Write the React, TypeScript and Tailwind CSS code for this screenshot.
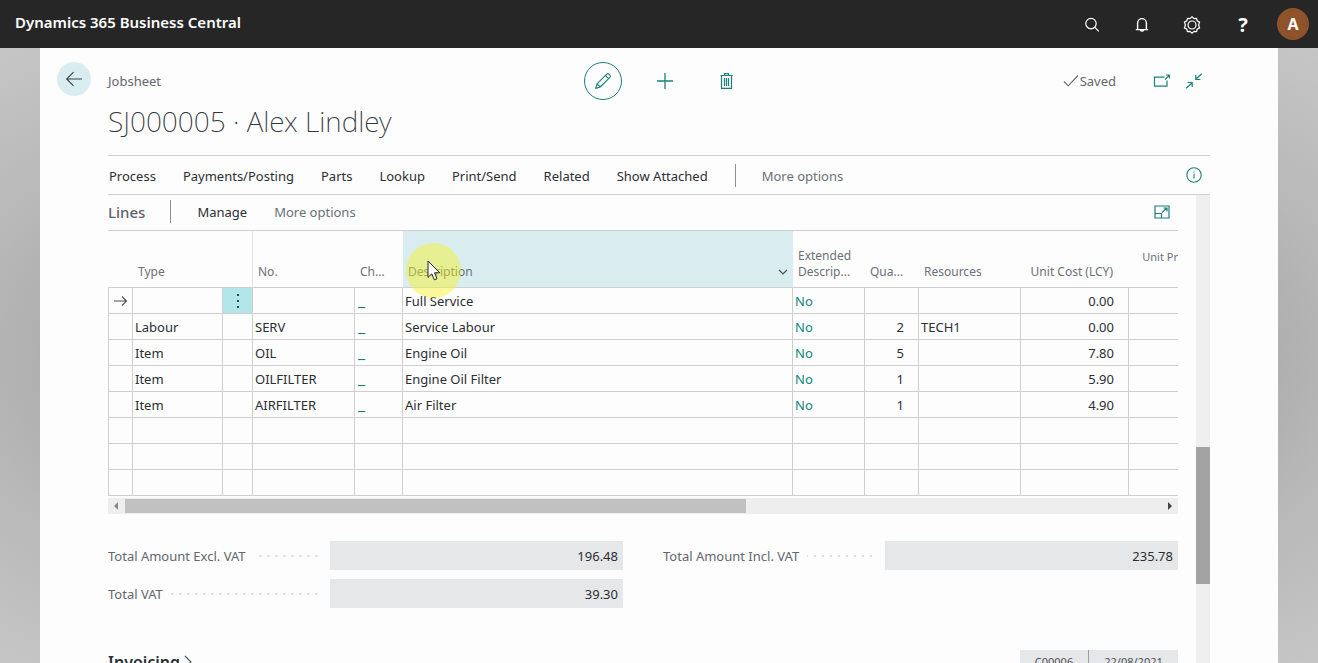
import React from "react";

type Line = { type: string; no: string; description: string; qty: string; resource: string; cost: string };

const lines: Line[] = [
  { type: "", no: "", description: "Full Service", qty: "", resource: "", cost: "0.00" },
  { type: "Labour", no: "SERV", description: "Service Labour", qty: "2", resource: "TECH1", cost: "0.00" },
  { type: "Item", no: "OIL", description: "Engine Oil", qty: "5", resource: "", cost: "7.80" },
  { type: "Item", no: "OILFILTER", description: "Engine Oil Filter", qty: "1", resource: "", cost: "5.90" },
  { type: "Item", no: "AIRFILTER", description: "Air Filter", qty: "1", resource: "", cost: "4.90" },
];

const actions = ["Process", "Payments/Posting", "Parts", "Lookup", "Print/Send", "Related", "Show Attached"];

const cell = "h-[26px] border-r border-b border-[#cfcfd0] p-0 pl-[2px] text-left align-middle";
const head = "border-b border-[#cfcfd0] p-0 pb-[7px] text-left align-bottom text-xs leading-4 font-normal text-[#6b7078]";

function TopBar() {
  return (
    <header className="flex h-12 shrink-0 items-center justify-between bg-[#262626] pr-[9px] pl-[15px] text-white">
      <a href="#home" className="pb-1 text-[15px] leading-5 font-semibold">
        Dynamics 365 Business Central
      </a>
      <div className="flex items-center">
        <button aria-label="Search" className="mr-[34px] flex size-4 items-center justify-center">
          <svg viewBox="0 0 16 16" className="size-4" fill="none" stroke="currentColor" strokeWidth="1.2">
            <circle cx="7" cy="7.6" r="5.2" />
            <path d="M10.8 11.4 14.8 15.4" />
          </svg>
        </button>
        <button aria-label="Notifications" className="mr-[33px] flex size-4 items-center justify-center">
          <svg viewBox="0 0 16 16" className="size-4" fill="none" stroke="currentColor" strokeWidth="1.4">
            <path d="M3.6 13.4V7a4.4 4.4 0 0 1 8.8 0v6.4M1.8 13.6h12.4M6.4 14a1.7 1.7 0 0 0 3.2 0" />
          </svg>
        </button>
        <button aria-label="Settings" className="mr-[34px] flex size-[18px] items-center justify-center pt-[2px]">
          <svg viewBox="0 0 18 18" className="size-[18px]" fill="none" stroke="currentColor" strokeWidth="1.2">
            <path
              strokeLinejoin="round"
              d="M7 2.6 9 .8l2 1.8 2.6-.3.6 2.6 2.4 1.2-1 2.9 1 2.9-2.4 1.2-.6 2.6-2.6-.3-2 1.8-2-1.8-2.6.3-.6-2.6L1.400 11.900l1-2.900-1-2.900 2.400-1.200.6-2.600z"
            />
            <circle cx="9" cy="9" r="4" />
          </svg>
        </button>
        <button aria-label="Help" className="mr-[26px] flex w-4 items-center justify-center pt-[2px] text-[20px] leading-6 font-bold">
          ?
        </button>
        <button className="flex size-8 items-center justify-center rounded-full bg-[#8f532c] text-base leading-6 font-bold">
          A
        </button>
      </div>
    </header>
  );
}

function PageHeader() {
  return (
    <div className="flex shrink-0">
      <div className="w-[68px] shrink-0 pt-[14px] pl-[17px]">
        <button aria-label="Back" className="flex size-[34px] items-center justify-center rounded-full bg-[#d9edf0] text-[#3a4046]">
          <svg viewBox="0 0 18 18" className="size-[18px]" fill="none" stroke="currentColor" strokeWidth="1.1">
            <path d="M17 9H2M8.500 2.200 1.700 9l6.800 6.800" />
          </svg>
        </button>
      </div>
      <div className="min-w-0 flex-1 pt-[14px] pr-[68px]">
        <div className="grid h-[38px] grid-cols-[476px_1fr_auto] items-center text-[13px] leading-5 text-[#62676e]">
          <span>Jobsheet</span>
          <div className="flex items-center text-[#1b8079]">
            <button aria-label="Edit" className="flex size-[38px] items-center justify-center rounded-full border border-[#1b8079]">
              <svg viewBox="0 0 18 18" className="size-[18px]" fill="none" stroke="currentColor" strokeWidth="1.1">
                <path
                  strokeLinejoin="round"
                  d="M1.600 16.400 3 11.800 12.700 2.100a1.500 1.500 0 0 1 2.100 0l1.100 1.100a1.500 1.500 0 0 1 0 2.100L6.200 15zM3 11.800 6.200 15M11.400 3.400l3.200 3.200"
                />
              </svg>
            </button>
            <button aria-label="New" className="ml-[34px] flex size-[18px] items-center justify-center">
              <svg viewBox="0 0 18 18" className="size-[18px]" fill="none" stroke="currentColor" strokeWidth="1.3">
                <path d="M9 1v16M1 9h16" />
              </svg>
            </button>
            <button aria-label="Delete" className="ml-11 flex size-[18px] items-center justify-center">
              <svg viewBox="0 0 18 18" className="size-[18px]" fill="none" stroke="currentColor" strokeWidth="1.2">
                <path d="M2.500 3.500h12M6.500 3.300V1.600h4v1.700M3.500 3.700V16.400h10V3.700M6.500 6v8M8.500 6v8M10.500 6v8" />
              </svg>
            </button>
          </div>
          <div className="flex items-center pr-[7px]">
            <svg viewBox="0 0 16 14" className="mr-px h-[14px] w-4" fill="none" stroke="#62676e" strokeWidth="1.1">
              <path d="M1 7.500 5.200 11.800 15 1.500" />
            </svg>
            <span className="text-[#62676e]">Saved</span>
            <button aria-label="Open in new window" className="ml-[37px] text-[#1b8079]">
              <svg viewBox="0 0 18 16" className="h-4 w-[18px]" fill="none" stroke="currentColor" strokeWidth="1.2">
                <path d="M11.500 4.200H1.500v9h12.500V7.500M12 6.500l4.200-4.200M13 2h3.400v3.200" />
              </svg>
            </button>
            <button aria-label="Collapse" className="ml-[14px] text-[#1b8079]">
              <svg viewBox="0 0 18 18" className="size-[18px]" fill="none" stroke="currentColor" strokeWidth="1.2">
                <path d="M1.200 16.300 7 11M2.600 10.500h4.600v4.600M16.800 1.700 11 7M10.800 2.900v4.600h4.600" />
              </svg>
            </button>
          </div>
        </div>
        <h1 className="pt-[2px] pb-[15px] text-[28px] leading-[38px] font-extralight text-[#33373c]">SJ000005 · Alex Lindley</h1>
        <nav className="flex h-10 items-center border-y border-[#cfcfd0] pr-2 text-[13px] leading-5 text-[#2b2f34]">
          <div className="flex items-center gap-[27px] pt-px pl-px">
            {actions.map((a) => (
              <button key={a}>{a}</button>
            ))}
          </div>
          <span className="mr-[26px] ml-[27px] h-[23px] w-px bg-[#8b8f94]" />
          <button className="pt-px text-[#6b7078]">More options</button>
          <button aria-label="Details" className="ml-auto text-[#1b8079]">
            <svg viewBox="0 0 16 16" className="size-4" fill="none" stroke="currentColor" strokeWidth="1.1">
              <circle cx="8" cy="8" r="7.2" />
              <path d="M8 6.800v4.600M8 4.400v1.200" />
            </svg>
          </button>
        </nav>
      </div>
    </div>
  );
}

function LinesTable() {
  return (
    <div className="relative border-t border-[#cfcfd0]">
      <table className="w-full table-fixed border-separate border-spacing-0 text-[13px] leading-5 text-[#2b2f34]">
        <colgroup>
          <col className="w-[25px]" />
          <col className="w-[90px]" />
          <col className="w-[30px]" />
          <col className="w-[102px]" />
          <col className="w-[48px]" />
          <col />
          <col className="w-[72px]" />
          <col className="w-[54px]" />
          <col className="w-[102px]" />
          <col className="w-[108px]" />
          <col className="w-[49px]" />
        </colgroup>
        <thead>
          <tr className="h-[57px]">
            <th className={head} />
            <th className={head + " pl-[5px]"}>Type</th>
            <th className={head + " border-r border-r-[#e6e6e7]"} />
            <th className={head + " pl-[5px]"}>No.</th>
            <th className={head + " pl-[5px]"}>Ch...</th>
            <th className={head + " bg-[#d9edf0] pr-[5px] pl-[5px]"}>
              <span className="flex items-center justify-between">
                Description
                <svg viewBox="0 0 10 8" className="h-2 w-[10px]" fill="none" stroke="#4b5157" strokeWidth="1.2">
                  <path d="M1 2l4 4 4-4" />
                </svg>
              </span>
            </th>
            <th className={head + " pl-[5px]"}>
              Extended
              <br />
              Descrip...
            </th>
            <th className={head + " pl-[5px]"}>Qua...</th>
            <th className={head + " pl-[5px]"}>Resources</th>
            <th className={head + " pr-4 text-right"}>Unit Cost (LCY)</th>
            <th className="border-b border-[#cfcfd0] p-0 pb-[22px] text-right align-bottom text-[11px] leading-4 font-normal whitespace-nowrap text-[#6b7078]">
              Unit Pr
            </th>
          </tr>
        </thead>
        <tbody>
          {lines.map((l, i) => (
            <tr key={i}>
              <td className={cell + " border-l pl-[4px]"}>
                {i === 0 && (
                  <svg viewBox="0 0 16 14" className="h-[14px] w-4" fill="none" stroke="#4b5157" strokeWidth="1.1">
                    <path d="M1 7h12.500M9 2.500l4.500 4.500L9 11.500" />
                  </svg>
                )}
              </td>
              <td className={cell}>{l.type}</td>
              <td className={i === 0 ? cell + " bg-[#b3e6eb]" : cell}>
                {i === 0 && (
                  <button aria-label="Row actions" className="flex w-full justify-center pr-[2px]">
                    <svg viewBox="0 0 4 16" className="h-4 w-1" fill="#1f4f55">
                      <path d="M1 1h2v2H1zM1 7h2v2H1zM1 13h2v2H1z" />
                    </svg>
                  </button>
                )}
              </td>
              <td className={cell}>{l.no}</td>
              <td className={cell + " pl-[3px]"}>
                <a href="#attached" className="text-base leading-5 text-[#0f7f76]">
                  _
                </a>
              </td>
              <td className={cell}>{l.description}</td>
              <td className={cell}>
                <a href="#extended" className="text-[#0f857c]">
                  No
                </a>
              </td>
              <td className={cell + " pr-[14px] text-right"}>{l.qty}</td>
              <td className={cell}>{l.resource}</td>
              <td className={cell + " pr-[14px] text-right"}>{l.cost}</td>
              <td className="border-b border-[#cfcfd0]" />
            </tr>
          ))}
          {[0, 1, 2].map((r) => (
            <tr key={r}>
              <td className={cell + " border-l"} />
              {[1, 2, 3, 4, 5, 6, 7, 8, 9].map((c) => (
                <td key={c} className={cell} />
              ))}
              <td className="border-b border-[#cfcfd0]" />
            </tr>
          ))}
        </tbody>
      </table>
      <div className="absolute top-[12px] left-[298px] size-[55px] rounded-full bg-[#f6f21f]/45">
        <svg viewBox="0 0 14 22" className="absolute top-[17px] left-[21px] h-[22px] w-[14px]">
          <path d="M1 1v16.400l3.800-3.600 2.500 6 2.700-1.100-2.500-5.900h5.300z" fill="#fff" stroke="#222" strokeWidth="1" />
        </svg>
      </div>
    </div>
  );
}

function HorizontalScroll() {
  return (
    <div className="mt-[2px] flex h-4 items-center justify-between bg-[#eeeeef]">
      <div className="flex h-full w-full items-center">
        <svg viewBox="0 0 17 14" className="h-[14px] w-[17px] shrink-0" fill="#8a8a8a">
          <path d="M10 3v8L6 7z" />
        </svg>
        <div className="h-[14px] w-[59%] bg-[#c1c1c1]" />
      </div>
      <svg viewBox="0 0 17 14" className="h-[14px] w-[17px] shrink-0" fill="#444">
        <path d="M7 3v8l4-4z" />
      </svg>
    </div>
  );
}

function Total({ id, label, value }: { id: string; label: string; value: string }) {
  return (
    <div className="flex h-[29px] items-center text-[13px] leading-5">
      <div className="flex w-[222px] shrink-0 items-center pr-[10px]">
        <label htmlFor={id} className="shrink-0 pr-2 text-[#62676e]">
          {label}
        </label>
        <span className="h-[2px] flex-1 bg-[radial-gradient(circle,#d6d8da_1px,transparent_1px)] bg-[length:8px_2px] bg-right" />
      </div>
      <input id={id} readOnly defaultValue={value} className="h-full min-w-0 flex-1 bg-[#e6e7e8] px-[5px] text-right text-[#2b2f34] outline-none" />
    </div>
  );
}

export default function App() {
  return (
    <div className="flex h-screen flex-col overflow-hidden bg-[#b9b9b9] font-['Noto_Sans',sans-serif]">
      <TopBar />
      <div className="flex min-h-0 flex-1 bg-[radial-gradient(ellipse_at_center,#a9a9a9_60%,#b8b8b8_75%,#c6c6c6_100%)] px-10">
        <main className="flex min-w-0 flex-1 flex-col bg-[#fdfdfd]">
          <PageHeader />
          <div className="flex min-h-0 flex-1 gap-[18px] px-[68px]">
            <div className="min-w-0 flex-1 overflow-hidden">
              <div className="flex h-[35px] items-center pb-[2px] text-[13px] leading-5 text-[#2b2f34]">
                <h2 className="text-[15px] font-medium text-[#5d636a]">Lines</h2>
                <span className="mr-[26px] ml-[25px] h-[23px] w-px bg-[#8b8f94]" />
                <button>Manage</button>
                <button className="ml-[27px] text-[#6b7078]">More options</button>
                <button aria-label="Focus mode" className="mr-2 ml-auto text-[#1b8079]">
                  <svg viewBox="0 0 16 14" className="h-[14px] w-4" fill="none" stroke="currentColor" strokeWidth="1.2">
                    <path d="M1 1h14v12H1zM1 8.500h6.500V13M8 7.500 13 3M9.500 3H13v3.400" />
                  </svg>
                </button>
              </div>
              <LinesTable />
              <HorizontalScroll />
              <div className="grid grid-cols-2 gap-x-10 gap-y-[9px] pt-[27px]">
                <Total id="excl" label="Total Amount Excl. VAT" value="196.48" />
                <Total id="incl" label="Total Amount Incl. VAT" value="235.78" />
                <Total id="vat" label="Total VAT" value="39.30" />
              </div>
              <div className="flex items-start justify-between pt-[42px]">
                <h2 className="flex items-center text-base leading-6 font-semibold text-[#2b2f34]">
                  Invoicing
                  <svg viewBox="0 0 10 14" className="ml-1 h-[14px] w-[10px]" fill="none" stroke="#4b5157" strokeWidth="1.1">
                    <path d="M1 1l6 6-6 6" />
                  </svg>
                </h2>
                <div className="flex h-6 items-center bg-[#e6e7e8] text-center text-[11px] leading-6 text-[#4b5157]">
                  <span className="w-[69px] border-r border-[#9a9da1]">C00006</span>
                  <span className="w-[89px]">22/08/2021</span>
                </div>
              </div>
            </div>
            <div className="flex w-[14px] shrink-0 flex-col bg-[#efeff0]">
              <div className="flex-[252]" />
              <div className="flex-[137] bg-[#a3a3a3]" />
              <div className="flex-[79]" />
            </div>
          </div>
        </main>
      </div>
    </div>
  );
}
